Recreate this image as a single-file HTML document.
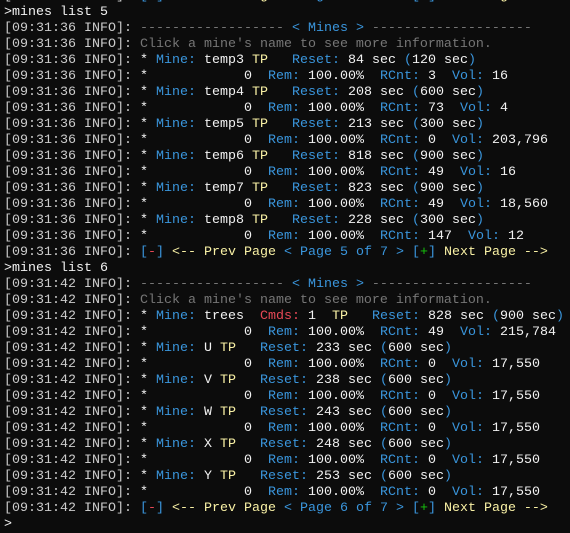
<!DOCTYPE html>
<html><head><meta charset="utf-8">
<style>
html,body{margin:0;padding:0;background:#0c0c0c;width:570px;height:533px;overflow:hidden}
pre{position:absolute;left:4px;top:-11px;margin:0;font-family:"Liberation Mono",monospace;font-size:13.33px;line-height:16px;color:#cccccc;white-space:pre}
.g{color:#767676}.b{color:#3a96dd}.w{color:#f2f2f2}.y{color:#f9f1a5}.r{color:#e74856}.gr{color:#16c60c}
</style></head><body>
<pre>[09:31:36 INFO]: <span class="b">[</span><span class="r">-</span><span class="b">]</span> <span class="y">&lt;-- Prev Page</span> <span class="b">&lt; Page 4 of 7 &gt;</span> <span class="b">[</span><span class="gr">+</span><span class="b">]</span> <span class="y">Next Page --&gt;</span>
<span class="w">&gt;mines list 5</span>
[09:31:36 INFO]: <span class="g">------------------ </span><span class="b">&lt; Mines &gt;</span><span class="g"> --------------------</span>
[09:31:36 INFO]: <span class="g">Click a mine's name to see more information.</span>
[09:31:36 INFO]: <span class="w">* </span><span class="b">Mine: </span><span class="w">temp3 </span><span class="y">TP</span>   <span class="b">Reset: </span><span class="w">84 sec </span><span class="b">(</span><span class="w">120 sec</span><span class="b">)</span>
[09:31:36 INFO]: <span class="w">*</span>            <span class="w">0</span>  <span class="b">Rem: </span><span class="w">100.00%</span>  <span class="b">RCnt: </span><span class="w">3</span>  <span class="b">Vol: </span><span class="w">16</span>
[09:31:36 INFO]: <span class="w">* </span><span class="b">Mine: </span><span class="w">temp4 </span><span class="y">TP</span>   <span class="b">Reset: </span><span class="w">208 sec </span><span class="b">(</span><span class="w">600 sec</span><span class="b">)</span>
[09:31:36 INFO]: <span class="w">*</span>            <span class="w">0</span>  <span class="b">Rem: </span><span class="w">100.00%</span>  <span class="b">RCnt: </span><span class="w">73</span>  <span class="b">Vol: </span><span class="w">4</span>
[09:31:36 INFO]: <span class="w">* </span><span class="b">Mine: </span><span class="w">temp5 </span><span class="y">TP</span>   <span class="b">Reset: </span><span class="w">213 sec </span><span class="b">(</span><span class="w">300 sec</span><span class="b">)</span>
[09:31:36 INFO]: <span class="w">*</span>            <span class="w">0</span>  <span class="b">Rem: </span><span class="w">100.00%</span>  <span class="b">RCnt: </span><span class="w">0</span>  <span class="b">Vol: </span><span class="w">203,796</span>
[09:31:36 INFO]: <span class="w">* </span><span class="b">Mine: </span><span class="w">temp6 </span><span class="y">TP</span>   <span class="b">Reset: </span><span class="w">818 sec </span><span class="b">(</span><span class="w">900 sec</span><span class="b">)</span>
[09:31:36 INFO]: <span class="w">*</span>            <span class="w">0</span>  <span class="b">Rem: </span><span class="w">100.00%</span>  <span class="b">RCnt: </span><span class="w">49</span>  <span class="b">Vol: </span><span class="w">16</span>
[09:31:36 INFO]: <span class="w">* </span><span class="b">Mine: </span><span class="w">temp7 </span><span class="y">TP</span>   <span class="b">Reset: </span><span class="w">823 sec </span><span class="b">(</span><span class="w">900 sec</span><span class="b">)</span>
[09:31:36 INFO]: <span class="w">*</span>            <span class="w">0</span>  <span class="b">Rem: </span><span class="w">100.00%</span>  <span class="b">RCnt: </span><span class="w">49</span>  <span class="b">Vol: </span><span class="w">18,560</span>
[09:31:36 INFO]: <span class="w">* </span><span class="b">Mine: </span><span class="w">temp8 </span><span class="y">TP</span>   <span class="b">Reset: </span><span class="w">228 sec </span><span class="b">(</span><span class="w">300 sec</span><span class="b">)</span>
[09:31:36 INFO]: <span class="w">*</span>            <span class="w">0</span>  <span class="b">Rem: </span><span class="w">100.00%</span>  <span class="b">RCnt: </span><span class="w">147</span>  <span class="b">Vol: </span><span class="w">12</span>
[09:31:36 INFO]: <span class="b">[</span><span class="r">-</span><span class="b">]</span> <span class="y">&lt;-- Prev Page</span> <span class="b">&lt; Page 5 of 7 &gt;</span> <span class="b">[</span><span class="gr">+</span><span class="b">]</span> <span class="y">Next Page --&gt;</span>
<span class="w">&gt;mines list 6</span>
[09:31:42 INFO]: <span class="g">------------------ </span><span class="b">&lt; Mines &gt;</span><span class="g"> --------------------</span>
[09:31:42 INFO]: <span class="g">Click a mine's name to see more information.</span>
[09:31:42 INFO]: <span class="w">* </span><span class="b">Mine: </span><span class="w">trees  </span><span class="r">Cmds: </span><span class="w">1</span>  <span class="y">TP</span>   <span class="b">Reset: </span><span class="w">828 sec </span><span class="b">(</span><span class="w">900 sec</span><span class="b">)</span>
[09:31:42 INFO]: <span class="w">*</span>            <span class="w">0</span>  <span class="b">Rem: </span><span class="w">100.00%</span>  <span class="b">RCnt: </span><span class="w">49</span>  <span class="b">Vol: </span><span class="w">215,784</span>
[09:31:42 INFO]: <span class="w">* </span><span class="b">Mine: </span><span class="w">U </span><span class="y">TP</span>   <span class="b">Reset: </span><span class="w">233 sec </span><span class="b">(</span><span class="w">600 sec</span><span class="b">)</span>
[09:31:42 INFO]: <span class="w">*</span>            <span class="w">0</span>  <span class="b">Rem: </span><span class="w">100.00%</span>  <span class="b">RCnt: </span><span class="w">0</span>  <span class="b">Vol: </span><span class="w">17,550</span>
[09:31:42 INFO]: <span class="w">* </span><span class="b">Mine: </span><span class="w">V </span><span class="y">TP</span>   <span class="b">Reset: </span><span class="w">238 sec </span><span class="b">(</span><span class="w">600 sec</span><span class="b">)</span>
[09:31:42 INFO]: <span class="w">*</span>            <span class="w">0</span>  <span class="b">Rem: </span><span class="w">100.00%</span>  <span class="b">RCnt: </span><span class="w">0</span>  <span class="b">Vol: </span><span class="w">17,550</span>
[09:31:42 INFO]: <span class="w">* </span><span class="b">Mine: </span><span class="w">W </span><span class="y">TP</span>   <span class="b">Reset: </span><span class="w">243 sec </span><span class="b">(</span><span class="w">600 sec</span><span class="b">)</span>
[09:31:42 INFO]: <span class="w">*</span>            <span class="w">0</span>  <span class="b">Rem: </span><span class="w">100.00%</span>  <span class="b">RCnt: </span><span class="w">0</span>  <span class="b">Vol: </span><span class="w">17,550</span>
[09:31:42 INFO]: <span class="w">* </span><span class="b">Mine: </span><span class="w">X </span><span class="y">TP</span>   <span class="b">Reset: </span><span class="w">248 sec </span><span class="b">(</span><span class="w">600 sec</span><span class="b">)</span>
[09:31:42 INFO]: <span class="w">*</span>            <span class="w">0</span>  <span class="b">Rem: </span><span class="w">100.00%</span>  <span class="b">RCnt: </span><span class="w">0</span>  <span class="b">Vol: </span><span class="w">17,550</span>
[09:31:42 INFO]: <span class="w">* </span><span class="b">Mine: </span><span class="w">Y </span><span class="y">TP</span>   <span class="b">Reset: </span><span class="w">253 sec </span><span class="b">(</span><span class="w">600 sec</span><span class="b">)</span>
[09:31:42 INFO]: <span class="w">*</span>            <span class="w">0</span>  <span class="b">Rem: </span><span class="w">100.00%</span>  <span class="b">RCnt: </span><span class="w">0</span>  <span class="b">Vol: </span><span class="w">17,550</span>
[09:31:42 INFO]: <span class="b">[</span><span class="r">-</span><span class="b">]</span> <span class="y">&lt;-- Prev Page</span> <span class="b">&lt; Page 6 of 7 &gt;</span> <span class="b">[</span><span class="gr">+</span><span class="b">]</span> <span class="y">Next Page --&gt;</span>
<span class="w">&gt;</span></pre>
</body></html>
